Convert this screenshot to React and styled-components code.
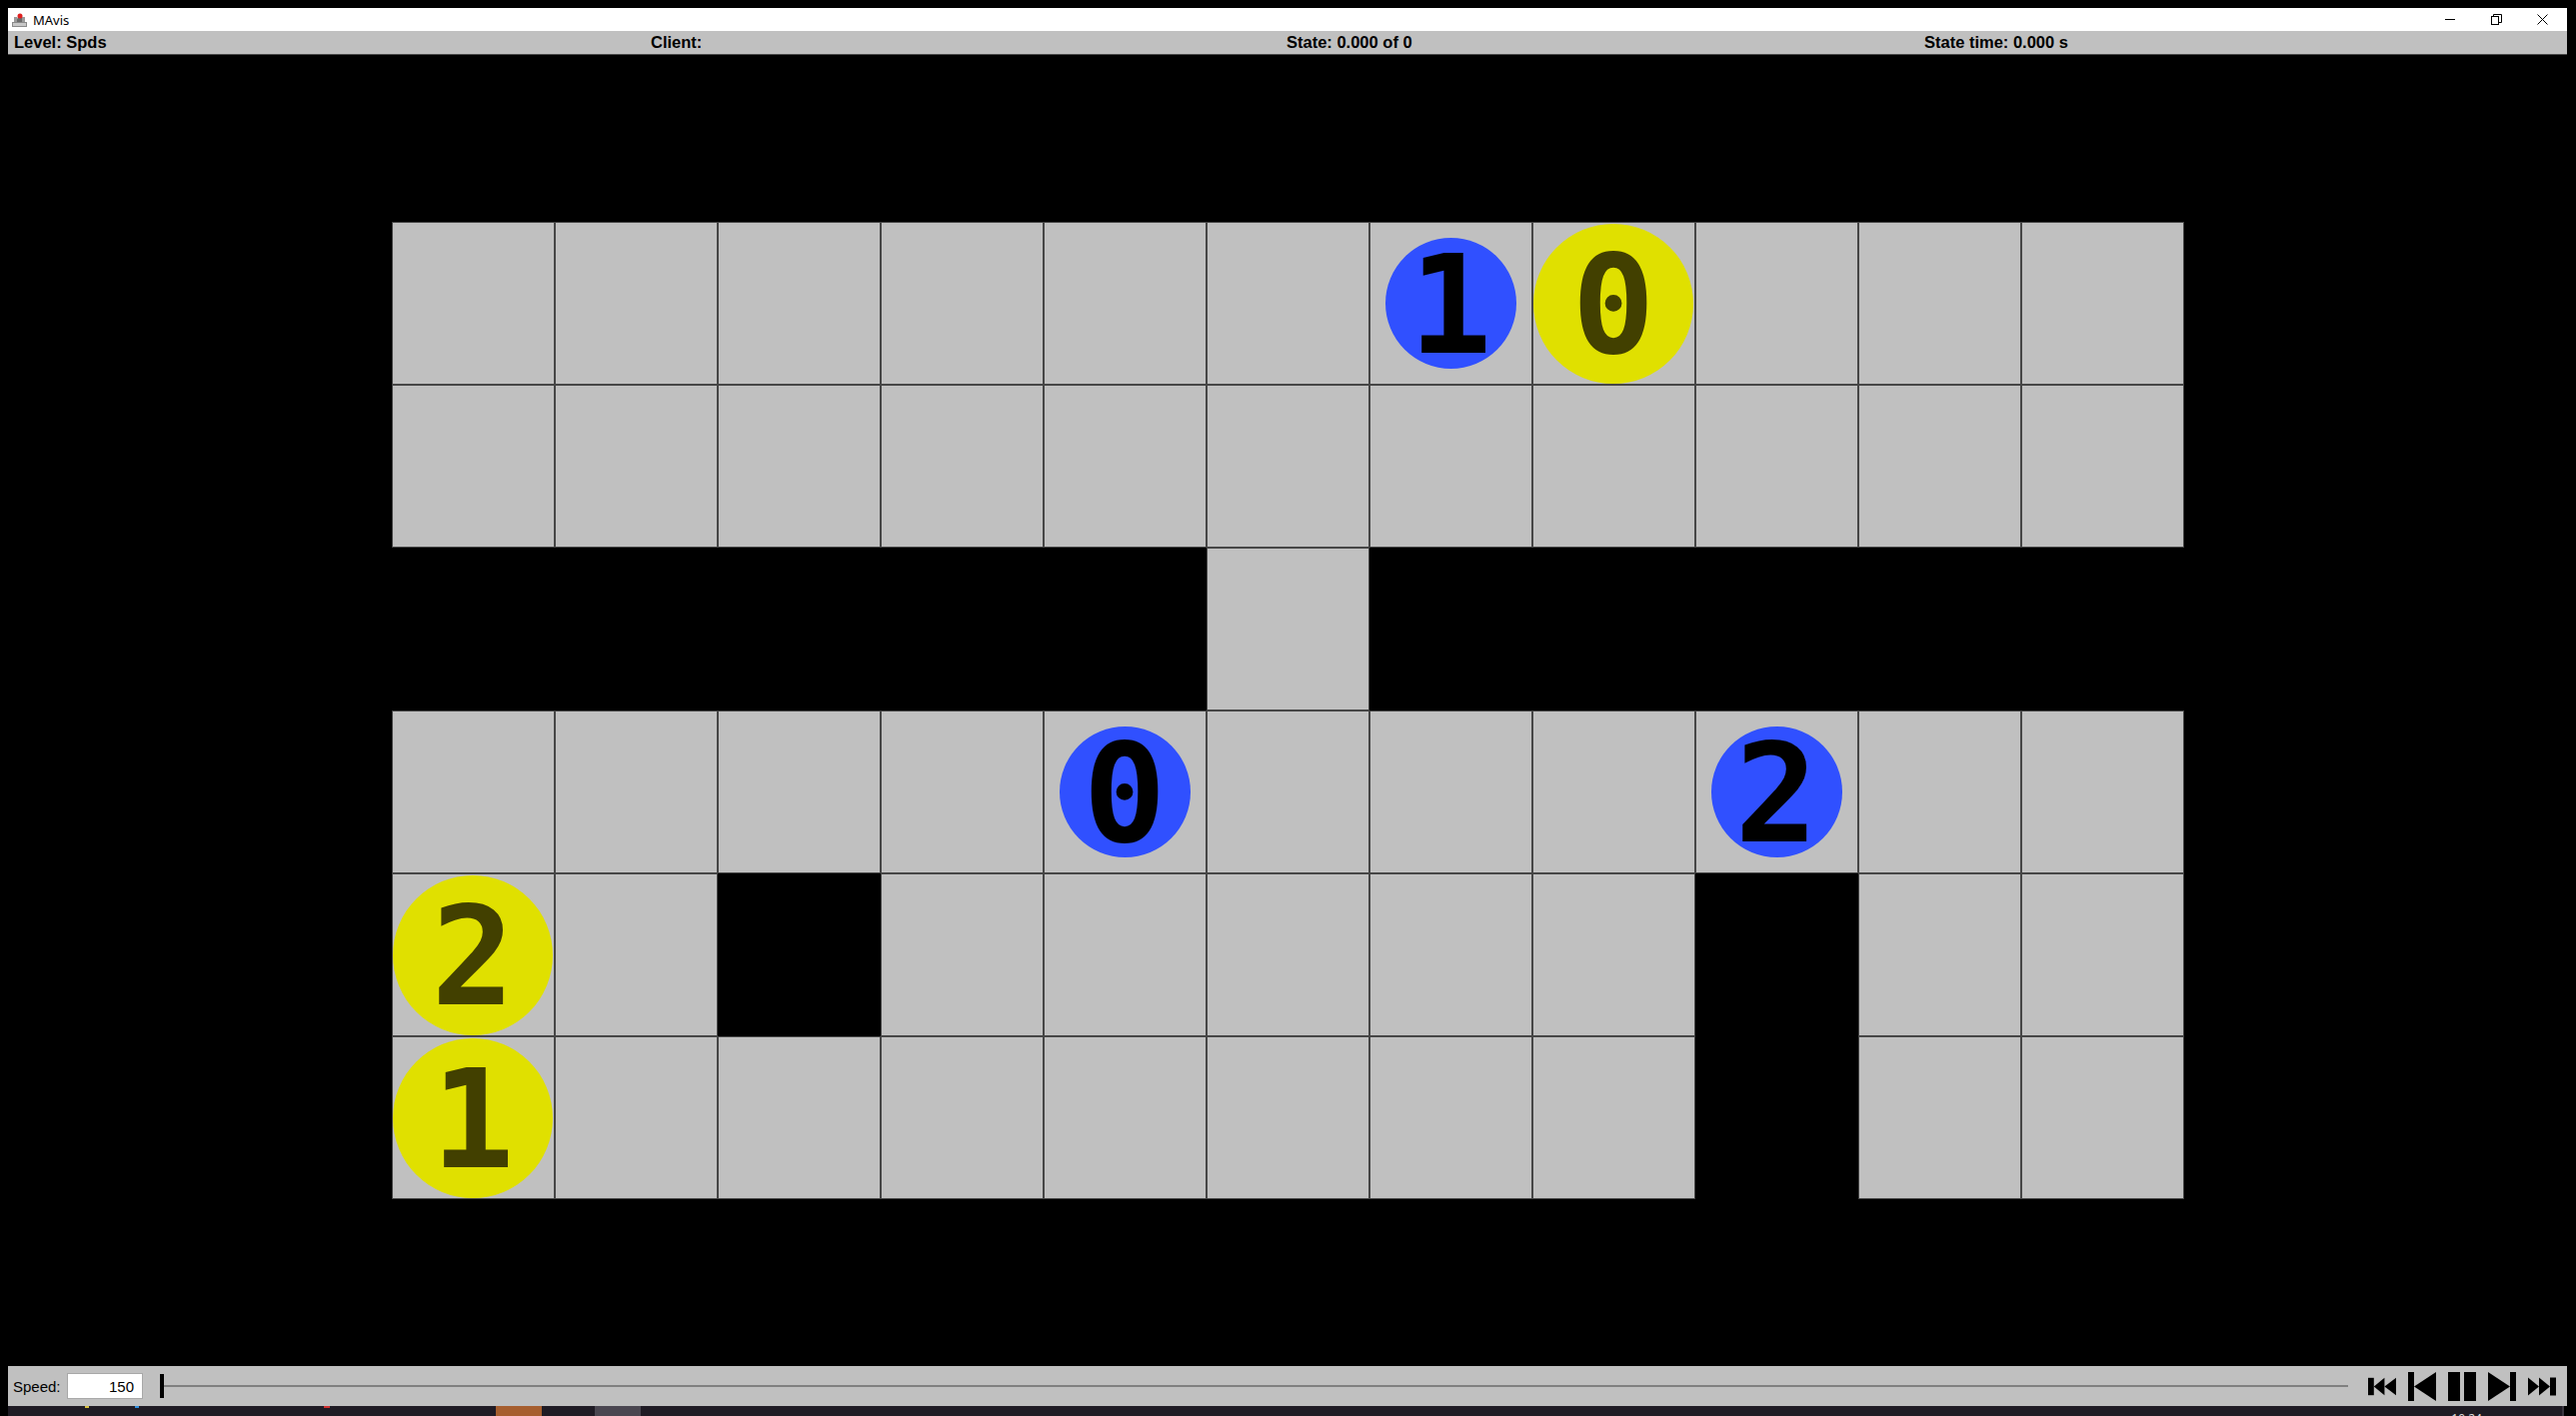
import React from "react";
import styled, { createGlobalStyle } from "styled-components";

const Global = createGlobalStyle`
  html, body { margin: 0; padding: 0; background: #000; }
  #root { width: 2577px; height: 1417px; overflow: hidden; }
`;

const Page = styled.div`
  width: 2577px;
  height: 1417px;
  background: #000;
  padding: 8px 0 0 8px;
  box-sizing: border-box;
`;

const Window = styled.div`
  width: 2560px;
  height: 1409px;
  display: flex;
  flex-direction: column;
  background: #000;
`;

const TitleBar = styled.div`
  height: 23px;
  flex: none;
  background: #fff;
  display: flex;
  align-items: center;
  padding-left: 3px;
`;

const TitleText = styled.span`
  font-family: "Noto Sans", "Liberation Sans", sans-serif;
  font-size: 13px;
  color: #000;
  margin-left: 5px;
`;

const WinControls = styled.div`
  margin-left: auto;
  display: flex;
  height: 23px;
  padding-right: 2px;
`;

const WinButton = styled.div`
  width: 46px;
  height: 23px;
  display: flex;
  align-items: center;
  justify-content: center;
`;

const StatusBar = styled.div`
  height: 23px;
  flex: none;
  background: #c0c0c0;
  border-bottom: 1px solid #4a4a4a;
  display: grid;
  grid-template-columns: 637px 636px 638px 1fr;
  align-items: center;
  padding-left: 6px;
`;

const StatusItem = styled.span`
  font-family: "Liberation Sans", Arial, sans-serif;
  font-weight: bold;
  font-size: 16.5px;
  color: #000;
  white-space: nowrap;
`;

const Canvas = styled.div`
  flex: 1;
  background: #000;
  display: flex;
  align-items: center;
  justify-content: center;
`;

const Board = styled.div`
  display: grid;
  grid-template-columns: repeat(11, 163px);
  grid-template-rows: repeat(6, 163px);
`;

const Cell = styled.div`
  box-sizing: border-box;
  background: ${(p) => (p.$wall ? "#000" : "#c0c0c0")};
  border: ${(p) => (p.$wall ? "none" : "1px solid #464646")};
  display: flex;
  align-items: center;
  justify-content: center;
`;

const Token = styled.div`
  width: ${(p) => (p.$box ? 160 : 131)}px;
  height: ${(p) => (p.$box ? 160 : 131)}px;
  border-radius: 50%;
  background: ${(p) => (p.$box ? "#e0e000" : "#3050ff")};
  color: ${(p) => (p.$box ? "#424000" : "#000")};
  display: flex;
  align-items: center;
  justify-content: center;
  font-family: "DejaVu Sans Mono", monospace;
  font-weight: bold;
  font-size: 138px;
  line-height: 1;
  flex: none;
`;

const Digit = styled.span`
  display: block;
  margin-top: 4px;
`;

const ControlBar = styled.div`
  height: 40px;
  flex: none;
  background: #c0c0c0;
  display: flex;
  align-items: center;
  padding-left: 5px;
  padding-right: 11px;
`;

const SpeedLabel = styled.span`
  font-family: "Liberation Sans", Arial, sans-serif;
  font-size: 15px;
  color: #000;
  width: 54px;
`;

const SpeedField = styled.div`
  width: 76px;
  height: 26px;
  box-sizing: border-box;
  background: #fff;
  border: 1px solid #a8a8a8;
  font-family: "Liberation Sans", Arial, sans-serif;
  font-size: 15px;
  color: #000;
  display: flex;
  align-items: center;
  justify-content: flex-end;
  padding-right: 8px;
`;

const Slider = styled.div`
  flex: 1;
  display: flex;
  align-items: center;
  margin-left: 17px;
  margin-right: 20px;
  height: 24px;
`;

const Thumb = styled.div`
  width: 4px;
  height: 24px;
  background: #000;
  flex: none;
`;

const Track = styled.div`
  flex: 1;
  height: 2px;
  background: #808080;
`;

const Buttons = styled.div`
  display: flex;
  align-items: center;
  gap: 12px;
`;

const PlayButton = styled.div`
  width: 28px;
  height: 29px;
  display: flex;
  align-items: center;
  justify-content: center;
`;

const Taskbar = styled.div`
  height: 10px;
  flex: none;
  background: #1f1b24;
  display: flex;
  overflow: hidden;
  border-right: 2px solid #3a3640;
  margin-right: 3px;
`;

const TaskItem = styled.div`
  width: ${(p) => p.$w}px;
  margin-left: ${(p) => p.$ml}px;
  height: ${(p) => p.$h || 10}px;
  background: ${(p) => p.$c};
  flex: none;
`;

const Clock = styled.span`
  margin-left: auto;
  margin-right: 80px;
  font-family: "Noto Sans", sans-serif;
  font-size: 12px;
  color: #ddd;
  line-height: 12px;
  margin-top: 7px;
`;

const layout = [
  "...........",
  "...........",
  "#####.#####",
  "...........",
  "..#.....#..",
  "........#..",
];

const tokens = {
  "0,6": { box: false, label: "1" },
  "0,7": { box: true, label: "0" },
  "3,4": { box: false, label: "0" },
  "3,8": { box: false, label: "2" },
  "4,0": { box: true, label: "2" },
  "5,0": { box: true, label: "1" },
};

const JavaIcon = () => (
  <svg width="17" height="17" viewBox="0 0 17 17">
    <rect x="1" y="11" width="15" height="5" fill="#8a8a8a" />
    <rect x="2" y="12" width="13" height="3" fill="#c8c8c8" />
    <path d="M5 11 L8 3 L10 3 L12 11 Z" fill="#6b6b6b" />
    <rect x="3" y="6" width="3" height="5" fill="#9a9a9a" />
    <rect x="11" y="6" width="3" height="5" fill="#9a9a9a" />
    <circle cx="9" cy="5" r="2.5" fill="#e02020" />
  </svg>
);

export default function App() {
  return (
    <>
      <Global />
      <Page>
        <Window>
          <TitleBar>
            <JavaIcon />
            <TitleText>MAvis</TitleText>
            <WinControls>
              <WinButton>
                <svg width="11" height="11" viewBox="0 0 11 11">
                  <line x1="0" y1="5.5" x2="10" y2="5.5" stroke="#000" strokeWidth="1" />
                </svg>
              </WinButton>
              <WinButton>
                <svg width="11" height="11" viewBox="0 0 11 11">
                  <rect x="0.5" y="2.5" width="7" height="8" fill="none" stroke="#000" />
                  <path d="M2.5 2.5 V0.5 H10.5 V8.5 H7.5" fill="none" stroke="#000" />
                </svg>
              </WinButton>
              <WinButton>
                <svg width="11" height="11" viewBox="0 0 11 11">
                  <path d="M0.5 0.5 L10.5 10.5 M10.5 0.5 L0.5 10.5" stroke="#000" strokeWidth="1" />
                </svg>
              </WinButton>
            </WinControls>
          </TitleBar>
          <StatusBar>
            <StatusItem>Level: Spds</StatusItem>
            <StatusItem>Client:</StatusItem>
            <StatusItem>State: 0.000 of 0</StatusItem>
            <StatusItem>State time: 0.000 s</StatusItem>
          </StatusBar>
          <Canvas>
            <Board>
              {layout.map((row, r) =>
                row.split("").map((ch, c) => {
                  const t = tokens[`${r},${c}`];
                  return (
                    <Cell key={`${r}-${c}`} $wall={ch === "#"}>
                      {t && (
                        <Token $box={t.box}>
                          <Digit>{t.label}</Digit>
                        </Token>
                      )}
                    </Cell>
                  );
                })
              )}
            </Board>
          </Canvas>
          <ControlBar>
            <SpeedLabel>Speed:</SpeedLabel>
            <SpeedField>150</SpeedField>
            <Slider>
              <Thumb />
              <Track />
            </Slider>
            <Buttons>
              <PlayButton>
                <svg width="29" height="29" viewBox="0 0 29 29">
                  <rect x="0" y="5.5" width="6" height="18" fill="#000" />
                  <polygon points="6,14.5 17,5.5 17,23.5" fill="#000" />
                  <polygon points="17,14.5 29,5.5 29,23.5" fill="#000" />
                </svg>
              </PlayButton>
              <PlayButton>
                <svg width="28" height="29" viewBox="0 0 28 29">
                  <rect x="0" y="0" width="6" height="29" fill="#000" />
                  <polygon points="6,14.5 28,0 28,29" fill="#000" />
                </svg>
              </PlayButton>
              <PlayButton>
                <svg width="28" height="29" viewBox="0 0 28 29">
                  <rect x="0" y="0" width="12" height="29" fill="#000" />
                  <rect x="16" y="0" width="12" height="29" fill="#000" />
                </svg>
              </PlayButton>
              <PlayButton>
                <svg width="28" height="29" viewBox="0 0 28 29">
                  <polygon points="0,0 22,14.5 0,29" fill="#000" />
                  <rect x="22" y="0" width="6" height="29" fill="#000" />
                </svg>
              </PlayButton>
              <PlayButton>
                <svg width="28" height="29" viewBox="0 0 28 29">
                  <polygon points="0,5.5 11,14.5 0,23.5" fill="#000" />
                  <polygon points="11,5.5 22,14.5 11,23.5" fill="#000" />
                  <rect x="22" y="5.5" width="6" height="18" fill="#000" />
                </svg>
              </PlayButton>
            </Buttons>
          </ControlBar>
          <Taskbar>
            <TaskItem $ml={77} $w={4} $h={2} $c="#d8c040" />
            <TaskItem $ml={46} $w={4} $h={2} $c="#3090e0" />
            <TaskItem $ml={185} $w={6} $h={2} $c="#d03030" />
            <TaskItem $ml={166} $w={46} $c="#a65e2e" />
            <TaskItem $ml={53} $w={46} $c="#4a4650" />
            <Clock>10:24</Clock>
          </Taskbar>
        </Window>
      </Page>
    </>
  );
}
